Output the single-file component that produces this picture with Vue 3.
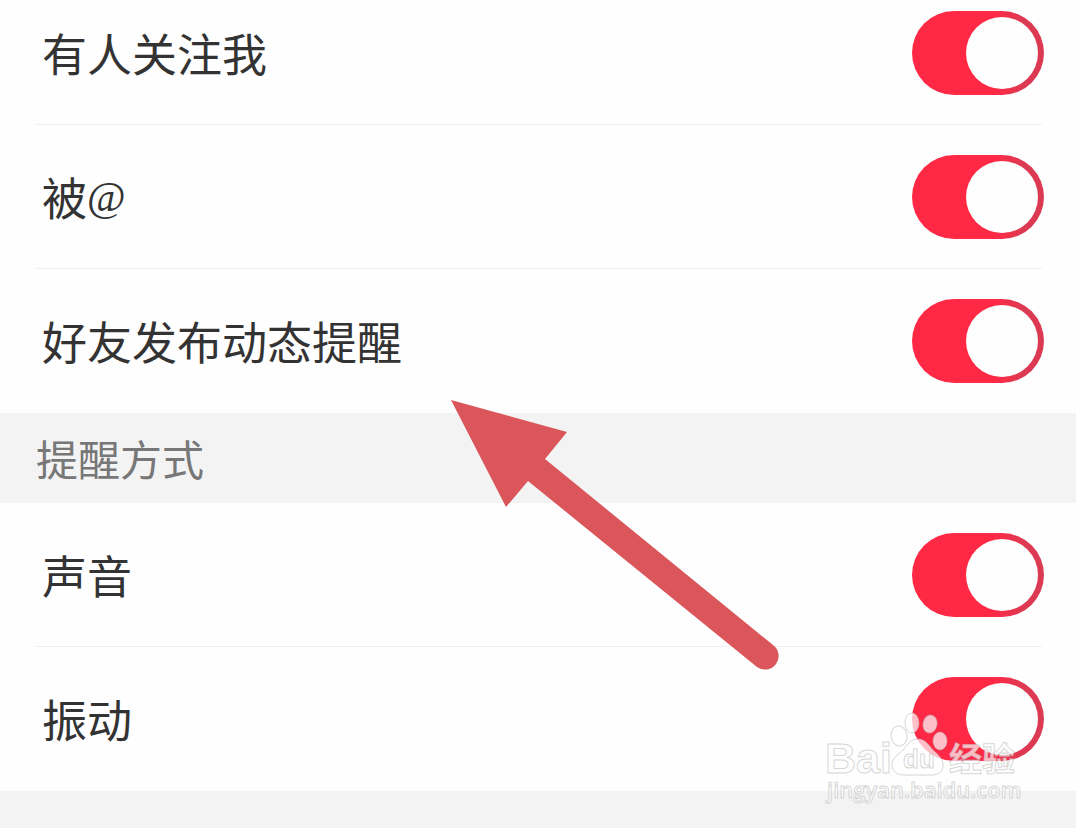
<script setup>
import { reactive } from 'vue'

const groups = reactive([
  {
    id: 'activity',
    title: '',
    items: [
      { id: 'follow', label: '有人关注我', on: true },
      { id: 'mention', label: '被', symbol: '@', on: true },
      { id: 'friend', label: '好友发布动态提醒', on: true },
    ],
  },
  {
    id: 'method',
    title: '提醒方式',
    items: [
      { id: 'sound', label: '声音', on: true },
      { id: 'vibrate', label: '振动', on: true },
    ],
  },
])
</script>

<template>
  <main class="page">
    <section v-for="group in groups" :key="group.id">
      <h2 v-if="group.title" class="heading">{{ group.title }}</h2>
      <div class="list">
        <div v-for="item in group.items" :key="item.id" class="row">
          <label class="label" :for="item.id">{{ item.label }}<span v-if="item.symbol" class="symbol">{{ item.symbol }}</span></label>
          <input :id="item.id" v-model="item.on" class="switch" type="checkbox" role="switch" />
        </div>
      </div>
    </section>

    <svg class="arrow" viewBox="0 0 330 272" aria-hidden="true">
      <path
        d="M1 0 L117 32 L95 59 L323 245 A13 13 0 0 1 307 267 L78 81 L56 107 Z"
        fill="#da565b"
      />
    </svg>

    <svg class="watermark" viewBox="0 0 200 106" aria-hidden="true">
      <g class="ink">
        <ellipse cx="74" cy="31" rx="8" ry="10" transform="rotate(-8 74 31)" />
        <ellipse cx="87" cy="18" rx="7" ry="10" />
        <ellipse cx="105" cy="19" rx="7" ry="9" transform="rotate(10 105 19)" />
        <ellipse cx="115" cy="36" rx="7" ry="9" />
        <path d="M93 34 C101 34 104 41 109 46 C115 51 119 56 118 62 C117 68 112 70 106 70 L79 70 C72 70 67 66 67 60 C67 53 73 50 78 45 C83 40 85 34 93 34 Z" />
        <text class="latin" x="0" y="68">Bai</text>
        <text class="du" x="78" y="63">du</text>
        <text class="cjk" x="124" y="66">经验</text>
        <text class="site" x="2" y="93">jingyan.baidu.com</text>
      </g>
    </svg>
  </main>
</template>

<style>
body {
  margin: 0;
  background: #f3f3f3;
}
</style>

<style scoped>
.page {
  position: relative;
  min-height: 100vh;
  overflow: hidden;
  font-family: "Noto Sans CJK SC", sans-serif;
}

.list {
  padding: 0 34px 0 36px;
  background: #fefefe;
}

.row {
  display: flex;
  align-items: center;
  justify-content: space-between;
  padding: 30px 0 29px 6px;
  border-bottom: 1px solid #efefef;
}

.row:last-child {
  border-bottom-color: transparent;
}

section:first-child .row:first-child {
  padding-top: 11px;
}

.label {
  display: flex;
  align-items: center;
  color: #333;
  font-size: 45px;
  line-height: 84px;
}

.symbol {
  font-family: "Liberation Serif", serif;
  font-size: 42px;
}

.heading {
  margin: 0;
  padding: 0 36px;
  background: #f3f3f3;
  color: #777;
  font-size: 42px;
  font-weight: 400;
  line-height: 90px;
}

.switch {
  appearance: none;
  flex: none;
  box-sizing: border-box;
  width: 132px;
  height: 84px;
  margin: 0 -2px 0 0;
  padding: 6px;
  border-radius: 42px;
  background: #c8c8c8;
  cursor: pointer;
}

.switch::before {
  content: "";
  display: block;
  width: 72px;
  height: 72px;
  border-radius: 50%;
  background: #fefefe;
}

.switch:checked {
  background: linear-gradient(90deg, #ff2946 62%, #dc3a52 85%);
}

.switch:checked::before {
  margin-left: auto;
}

.arrow {
  position: absolute;
  top: 400px;
  left: 450px;
  width: 330px;
  height: 272px;
  pointer-events: none;
}

.watermark {
  position: absolute;
  top: 705px;
  right: 51px;
  width: 200px;
  height: 106px;
  pointer-events: none;
}

.ink {
  fill: rgba(255, 255, 255, 0.7);
  stroke: rgba(180, 180, 180, 0.55);
  stroke-width: 1px;
}

.latin {
  font: 700 43px "Liberation Sans", sans-serif;
}

.du {
  font: 700 26px "Liberation Sans", sans-serif;
}

.cjk {
  font: 700 33px "Noto Sans CJK SC", sans-serif;
}

.site {
  font: 600 22px "Open Sans", sans-serif;
}
</style>
